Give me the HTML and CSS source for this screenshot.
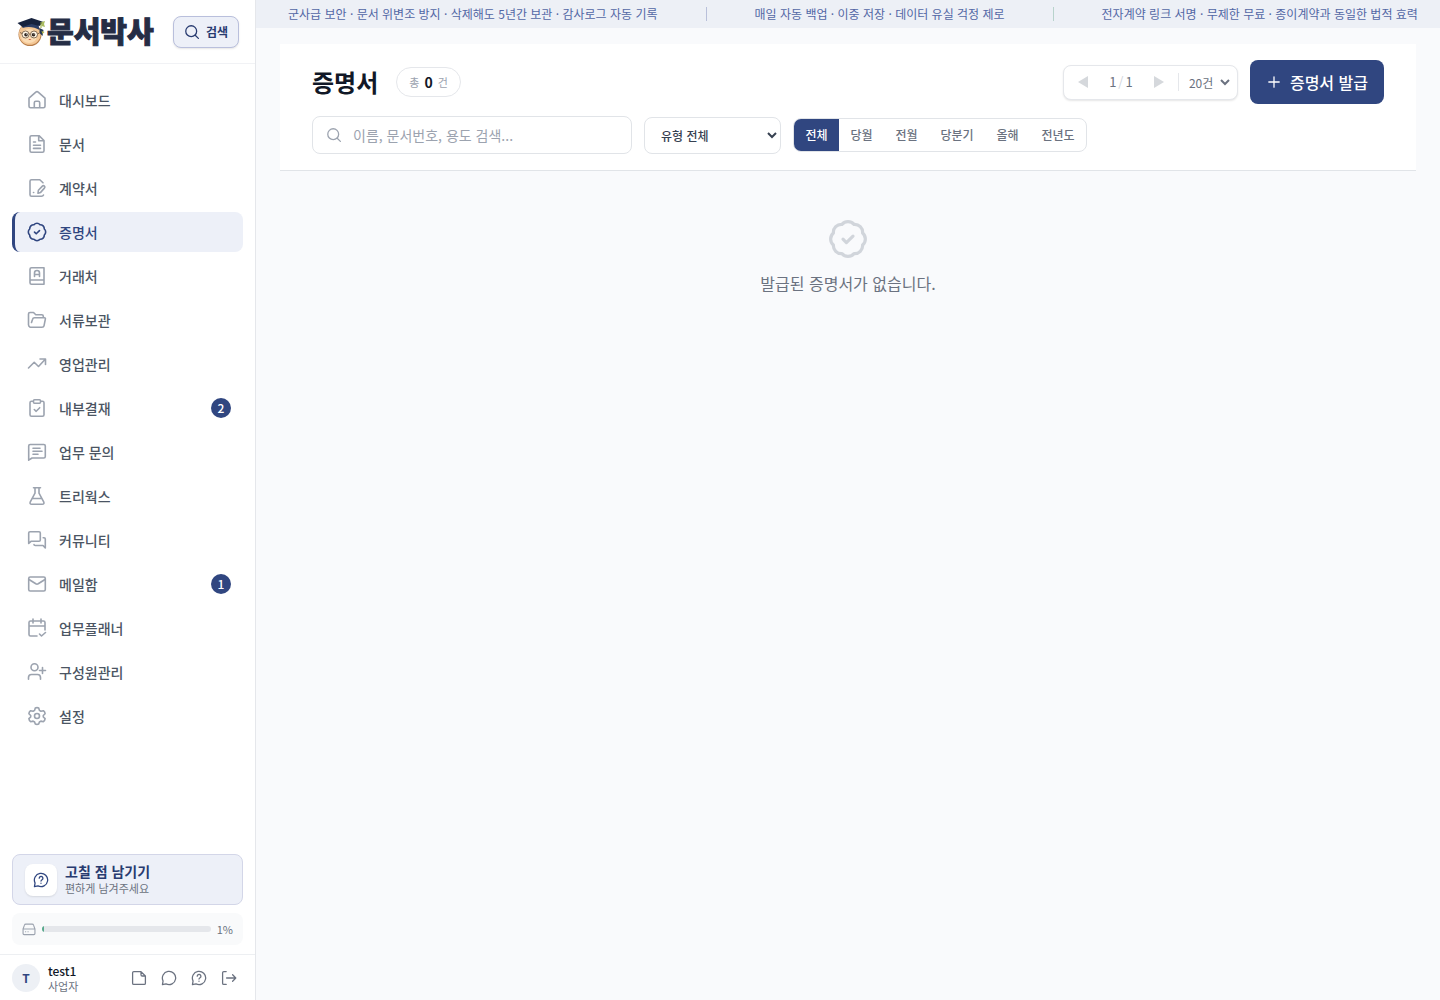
FILE: index.html
```html
<!DOCTYPE html>
<html lang="ko">
<head>
<meta charset="utf-8">
<meta name="viewport" content="width=device-width, initial-scale=1">
<title>증명서 - 문서박사</title>
<link rel="stylesheet" href="styles.css">
</head>
<body>
<svg class="sprite" aria-hidden="true">
  <symbol id="seal" viewBox="0 0 20 20"><path d="M13.02 2.7A4 4 0 0 1 17.3 6.98A4 4 0 0 1 17.3 13.02A4 4 0 0 1 13.02 17.3A4 4 0 0 1 6.98 17.3A4 4 0 0 1 2.7 13.02A4 4 0 0 1 2.7 6.98A4 4 0 0 1 6.98 2.7A4 4 0 0 1 13.02 2.7Z"/><path d="m7.5 10.1 1.7 1.7 3.3-3.2"/></symbol>
  <symbol id="search" viewBox="0 0 20 20"><circle cx="9" cy="9" r="6.8"/><path d="m14 14 4 4"/></symbol>
  <symbol id="bubble" viewBox="0 0 20 20"><path d="M1.800 18.200 2.600 13.700A8.300 8.300 0 1 1 6.300 17.400Z"/></symbol>
  <symbol id="help" viewBox="0 0 20 20"><path d="M1.800 18.200 2.600 13.700A8.300 8.300 0 1 1 6.300 17.400Z"/><path d="M7.800 7.700a2.300 2.300 0 1 1 3.500 2c-.8.5-1.300.9-1.300 1.600M10 14v.2"/></symbol>
</svg>
<div class="app">
  <aside class="sidebar">
    <header class="brand-bar">
      <a class="brand" href="#">
        <svg class="mascot" viewBox="0 0 30 30" aria-hidden="true">
          <circle cx="13.500" cy="17.500" r="11.500" fill="#b77d4a"/><circle cx="13.300" cy="17" r="10.800" fill="#f4c795"/><ellipse cx="12.500" cy="19" rx="8" ry="7" fill="#fbdcb4"/>
          <path d="m6 7 9-2 7 3 1 5c-5-3-11-4-17-2Z" fill="#2c3e66"/><path d="m1 6 14-5 12 4-4 4-8-2-9 3Z" fill="#17233e"/>
          <path d="M24.500 5v6" stroke="#90a735"/><path d="m25 5 3.500-1-1 3 1 3-3.500-1Z" fill="#a9bb5e"/><path d="m23 11 4 2-1 6-3-3Z" fill="#263955"/><path d="m25 14 3 1-2 2Z" fill="#b5b94d"/>
          <g fill="#fff6e6" stroke="#69503a" stroke-width=".8"><circle cx="9" cy="17.500" r="3.500"/><circle cx="17.500" cy="17.500" r="3.500"/><path d="M12.500 17h1.500M3.500 15.500l2 1M21 17l2-1"/></g>
          <circle cx="9.500" cy="17.700" r="1.800" fill="#302620"/><circle cx="17" cy="17.700" r="1.800" fill="#302620"/><circle cx="10" cy="17" r=".5" fill="#fff"/><circle cx="17.500" cy="17" r=".5" fill="#fff"/>
          <path d="M11.800 22q1.500 1.800 3 0Z" fill="#c9573f"/>
        </svg>
        <span>문서박사</span>
      </a>
      <button class="search-button" type="button"><svg class="icon icon-16"><use href="#search"/></svg>검색</button>
    </header>
    <nav class="nav" aria-label="주 메뉴">
      <a href="#"><svg class="icon" viewBox="0 0 20 20"><path d="M2 8.2 8.800 2.200q1.200-1 2.400 0L18 8.200v8q0 1.600-1.600 1.600H3.600Q2 17.800 2 16.200ZM7.300 17.800v-5q0-1.500 1.500-1.500h2.400q1.500 0 1.500 1.500v5"/></svg>대시보드</a>
      <a href="#"><svg class="icon" viewBox="0 0 20 20"><path d="M12 1.700H4.500Q3 1.700 3 3.200v13.600q0 1.500 1.500 1.500h11q1.500 0 1.500-1.500V6.500ZM11.700 2v4.800H17M6.500 8h2M6.500 11.200h7M6.500 14.400h7"/></svg>문서</a>
      <a href="#"><svg class="icon" viewBox="0 0 20 20"><path d="M16.500 17q-.5 1.300-2 1.300h-10Q3 18.300 3 16.800V3.200q0-1.500 1.500-1.500h8.300L16 4.800M6.500 14.500h.2M11 15.200l.4-2.900 4-4.200q1-1 2 0t0 2l-3.800 4.300Z"/></svg>계약서</a>
      <a class="active" href="#" aria-current="page"><svg class="icon"><use href="#seal"/></svg>증명서</a>
      <a href="#"><svg class="icon" viewBox="0 0 20 20"><path d="M4.500 1.700H17v16.600H4.500Q3 18.300 3 16.800V3.200q0-1.500 1.500-1.500ZM3 14h14M7.500 10.500V7a2.500 2.500 0 0 1 5 0v3.500M7.500 8.500h5"/></svg>거래처</a>
      <a href="#"><svg class="icon" viewBox="0 0 20 20"><path d="M3 17.200q-1.500-1-1.500-2.500V4q0-1.500 1.500-1.500h3.500l2.300 2.300h6q1.500 0 1.500 1.500v1.500M4.500 12.500l1-3q.4-1.700 2-1.700h9.800q1.500 0 1 1.500l-1.300 6.500q-.3 1.400-2 1.400H3"/></svg>서류보관</a>
      <a href="#"><svg class="icon" viewBox="0 0 20 20"><path d="m1.500 14 5.700-5.700 4.300 4.200L18.500 5M13 5h5.500v5.500"/></svg>영업관리</a>
      <a href="#"><svg class="icon" viewBox="0 0 20 20"><path d="M6.500 3.200h-2Q3 3.200 3 4.700v12q0 1.500 1.500 1.500h11q1.500 0 1.500-1.500v-12q0-1.500-1.500-1.500h-2M7.500 1.700h5q1 0 1 1v1.500q0 1-1 1h-5q-1 0-1-1V2.700q0-1 1-1ZM7.300 11.500l1.900 1.800 3.500-3.600"/></svg>내부결재<span class="badge">2</span></a>
      <a href="#"><svg class="icon" viewBox="0 0 20 20"><path d="M1.700 18.200V4q0-1.500 1.500-1.500h13.600q1.500 0 1.500 1.500v10.500q0 1.500-1.500 1.500H5ZM6 6.200h7M6 9.200h9M6 12.200h5"/></svg>업무 문의</a>
      <a href="#"><svg class="icon" viewBox="0 0 20 20"><path d="M6.500 1.700h7M8 1.700v5.500L3.300 15.800q-1 2.400 1.500 2.400h10.400q2.500 0 1.500-2.400L12 7.200V1.700M5.500 12.500h9"/></svg>트리웍스</a>
      <a href="#"><svg class="icon" viewBox="0 0 20 20"><path d="M1.700 13.500V3q0-1.300 1.300-1.300h9q1.300 0 1.300 1.300v7q0 1.300-1.300 1.300H4ZM7 14.500q0 1 1.300 1H16l2.300 2.500V9q0-1.300-1.300-1.300h-.8"/></svg>커뮤니티</a>
      <a href="#"><svg class="icon" viewBox="0 0 20 20"><rect x="1.700" y="3" width="16.600" height="14" rx="1.500"/><path d="m2 5.500 6.800 4.300q1.200.7 2.400 0L18 5.500"/></svg>메일함<span class="badge">1</span></a>
      <a href="#"><svg class="icon" viewBox="0 0 20 20"><path d="M10 18H3.500Q2 18 2 16.500v-12Q2 3 3.500 3h13Q18 3 18 4.500V12M6 1v4M14 1v4M2 8h16M12.500 16l2 2 4-3.500"/></svg>업무플래너</a>
      <a href="#"><svg class="icon" viewBox="0 0 20 20"><circle cx="7.500" cy="5.300" r="3.500"/><path d="M1.500 17.200v-1.700q0-3 3-3h6q3 0 3 3v1.700M15.500 5.500v6M12.500 8.500h6"/></svg>구성원관리</a>
      <a href="#"><svg class="icon" viewBox="0 0 20 20"><circle cx="10" cy="10" r="2.500"/><path d="M8.300 2q1.700-.8 3.400 0l.7 2.400 1.500.9 2.500-.6q1.500 1.100 1.700 3L16.300 9.500v1.500l1.800 1.700q-.2 1.900-1.700 3l-2.500-.6-1.500.9-.7 2q-1.700.8-3.400 0l-.7-2-1.500-.9-2.500.6q-1.500-1.100-1.700-3L3.700 11V9.500L1.900 7.700q.2-1.900 1.700-3l2.500.6 1.500-.9Z"/></svg>설정</a>
    </nav>
    <div class="sidebar-tools">
      <button class="feedback" type="button">
        <span class="feedback-icon"><svg class="icon icon-16"><use href="#help"/></svg></span>
        <span class="feedback-text"><strong>고칠 점 남기기</strong><small>편하게 남겨주세요</small></span>
      </button>
      <div class="storage">
        <svg class="icon icon-14" viewBox="0 0 20 20"><path d="m1.500 10 2-5.500Q4 3 5.500 3h9Q16 3 16.500 4.500l2 5.500v6.500q0 1.500-1.500 1.500H3q-1.500 0-1.500-1.500V10h17M5 14h.3M8.500 14h.3"/></svg>
        <div class="meter" role="progressbar" aria-label="저장 공간" aria-valuenow="1" aria-valuemin="0" aria-valuemax="100"><span style="width:1%"></span></div>
        <span>1%</span>
      </div>
    </div>
    <footer class="account">
      <span class="avatar">T</span>
      <div class="user"><strong>test1</strong><small>사업자</small></div>
      <div class="account-actions">
        <button type="button" aria-label="메모"><svg class="icon icon-16" viewBox="0 0 20 20"><path d="M12.500 2H3.500Q2 2 2 3.500v13Q2 18 3.500 18h13q1.500 0 1.500-1.500V7.500ZM12.500 2v4q0 1.500 1.500 1.500h4"/></svg></button>
        <button type="button" aria-label="채팅"><svg class="icon icon-16"><use href="#bubble"/></svg></button>
        <button type="button" aria-label="도움말"><svg class="icon icon-16"><use href="#help"/></svg></button>
        <button type="button" aria-label="로그아웃"><svg class="icon icon-16" viewBox="0 0 20 20"><path d="M6.500 2H3.500Q2 2 2 3.500v13Q2 18 3.500 18h3M7 10h11.500M14.500 6l4 4-4 4"/></svg></button>
      </div>
    </footer>
  </aside>
  <div class="content">
    <div class="ticker">
      <span>군사급 보안 · 문서 위변조 방지 · 삭제해도 5년간 보관 · 감사로그 자동 기록</span><i></i>
      <span>매일 자동 백업 · 이중 저장 · 데이터 유실 걱정 제로</span><i class="green"></i>
      <span>전자계약 링크 서명 · 무제한 무료 · 종이계약과 동일한 법적 효력</span>
    </div>
    <main class="main">
      <section class="panel">
        <div class="title-row">
          <h1>증명서</h1>
          <span class="count">총 <b>0</b> 건</span>
          <div class="pager">
            <button type="button" aria-label="이전 페이지" disabled><svg viewBox="0 0 10 12"><path d="M10 0v12L0 6Z"/></svg></button>
            <span class="page">1<em>/</em>1</span>
            <button type="button" aria-label="다음 페이지" disabled><svg viewBox="0 0 10 12"><path d="M0 0v12l10-6Z"/></svg></button>
            <select aria-label="페이지당 건수"><option>20건</option><option>50건</option></select>
          </div>
          <button class="primary" type="button"><svg class="icon icon-16" viewBox="0 0 20 20"><path d="M10 3.500v13M3.500 10h13"/></svg>증명서 발급</button>
        </div>
        <div class="filter-row">
          <label class="search"><svg class="icon icon-16"><use href="#search"/></svg><input type="text" aria-label="증명서 검색" placeholder="이름, 문서번호, 용도 검색..."></label>
          <select class="type" aria-label="유형"><option>유형 전체</option></select>
          <div class="periods" role="group" aria-label="기간">
            <button class="active" type="button">전체</button><button type="button">당월</button><button type="button">전월</button><button type="button">당분기</button><button type="button">올해</button><button type="button">전년도</button>
          </div>
        </div>
      </section>
      <section class="empty"><svg class="icon"><use href="#seal"/></svg><p>발급된 증명서가 없습니다.</p></section>
    </main>
  </div>
</div>
</body>
</html>
```
FILE: styles.css
```css
* { box-sizing: border-box; }
body { margin: 0; background: #f9fafc; color: #111827; font-family: "Noto Sans CJK KR", sans-serif; font-size: 14px; line-height: 20px; }
button, input, select { font: inherit; color: inherit; }
button { display: inline-flex; align-items: center; border: 0; padding: 0; background: none; cursor: pointer; }
a { color: inherit; text-decoration: none; }
.sprite { display: none; }
.icon { width: 20px; height: 20px; flex: none; fill: none; stroke: currentColor; stroke-width: 1.6; stroke-linecap: round; stroke-linejoin: round; }
.icon-16 { width: 16px; height: 16px; }
.icon-14 { width: 14px; height: 14px; }
.app { display: flex; min-height: 100vh; }

/* Sidebar */
.sidebar { position: sticky; top: 0; display: flex; flex-direction: column; flex: 0 0 256px; height: 100vh; background: #fff; border-right: 1px solid #e5e7eb; }
.brand-bar { display: flex; align-items: center; justify-content: space-between; flex: none; height: 64px; padding: 0 16px; border-bottom: 1px solid #f1f2f5; }
.brand { display: flex; align-items: center; color: #252d45; font-size: 29px; line-height: 32px; font-weight: 900; -webkit-text-stroke: 1px #252d45; }
.brand span { padding-bottom: 3px; }
.mascot { width: 31px; height: 30px; }
.search-button { gap: 6px; height: 32px; padding: 0 10px; border: 1px solid #b9bfdc; border-radius: 8px; background: #edf0f8; color: #283b70; font-size: 12px; font-weight: 700; box-shadow: 0 1px 2px #0000001a; }
.nav { display: flex; flex: 1; flex-direction: column; gap: 4px; min-height: 0; padding: 16px 12px; overflow-y: auto; }
.nav a { display: flex; align-items: center; flex: none; gap: 12px; height: 40px; padding: 0 12px; border-left: 3px solid transparent; border-radius: 8px; color: #4b5563; font-weight: 500; }
.nav .icon { color: #9ca3af; }
.nav .active { border-left-color: #304680; background: #edf0f8; color: #304680; }
.nav .active .icon { color: #304680; }
.badge { width: 20px; height: 20px; margin-left: auto; border-radius: 10px; background: #304680; color: #fff; font-size: 12px; text-align: center; }
.sidebar-tools { display: flex; flex-direction: column; gap: 8px; padding: 0 12px 9px; }
.feedback { gap: 8px; height: 51px; padding: 0 12px; border: 1px solid #d3d6e8; border-radius: 8px; background: #edf0f8; text-align: left; }
.feedback-icon { display: grid; place-items: center; width: 32px; height: 32px; border-radius: 8px; background: #fff; color: #304680; box-shadow: 0 1px 2px #0000001a; }
.feedback-text { display: flex; flex-direction: column; }
.feedback strong { color: #283b70; font-size: 14px; line-height: 18px; }
.feedback small { line-height: 17px; }
small { color: #6b7280; font-size: 11px; }
.storage { display: flex; align-items: center; gap: 6px; height: 32px; padding: 0 10px; border-radius: 8px; background: #f9fafb; color: #6b7280; font-size: 11px; }
.storage .icon { color: #9ca3af; }
.meter { flex: 1; height: 6px; overflow: hidden; border-radius: 3px; background: #e5e7eb; }
.meter span { display: block; height: 100%; background: #58a98c; }
.account { display: flex; align-items: center; flex: none; gap: 8px; height: 46px; padding: 0 12px; border-top: 1px solid #edeff2; }
.avatar { display: grid; place-items: center; width: 28px; height: 28px; border-radius: 50%; background: #edf0f5; color: #304680; font-size: 12px; font-weight: 700; }
.user { display: flex; flex-direction: column; }
.user strong { font-size: 12px; line-height: 16px; font-weight: 500; }
.user small { line-height: 14px; }
.account-actions { display: flex; gap: 2px; margin-left: auto; color: #6b7280; }
.account-actions button { justify-content: center; width: 28px; height: 28px; }

/* Page */
.content { flex: 1; min-width: 0; }
.ticker { display: flex; align-items: center; gap: 48px; height: 28px; padding: 0 0 0 32px; overflow: hidden; background: #edf0f6; color: #5267a5; font-size: 12px; white-space: nowrap; }
.ticker span { flex: none; }
.ticker i { flex: none; width: 1px; height: 14px; background: #b9c0da; }
.ticker .green { background: #b8d3cc; }
.main { padding: 16px 24px; }
.panel { display: flex; flex-direction: column; gap: 12px; padding: 16px 32px; border-bottom: 1px solid #e1e4e8; background: #fff; }
.title-row, .filter-row { display: flex; align-items: center; gap: 12px; }
h1 { margin: 0 6px 0 0; color: #111827; font-size: 24px; line-height: 32px; font-weight: 700; }
.count { display: flex; align-items: center; gap: 5px; height: 30px; padding: 0 12px; border: 1px solid #e5e7eb; border-radius: 15px; color: #9ca3af; font-size: 11px; }
.count b { color: #111827; font-size: 14px; }
.pager { display: flex; align-items: center; height: 35px; padding-right: 4px; margin-left: auto; border: 1px solid #e5e7eb; border-radius: 8px; background: #fff; color: #6b7280; font-size: 12px; box-shadow: 0 1px 2px #0000001a; }
.pager button { justify-content: center; width: 38px; height: 32px; }
.pager svg { width: 10px; height: 12px; fill: #d5d8dc; }
.page { width: 38px; text-align: center; font-size: 13px; }
.page em { margin: 0 2px; color: #d1d5db; font-style: normal; }
.pager select { width: 55px; height: 18px; padding: 0 0 0 6px; border: 0; border-left: 1px solid #e5e7eb; background: #fff; line-height: 18px; }
.primary { gap: 8px; height: 44px; padding: 0 16px; border-radius: 8px; background: #304680; color: #fff; font-size: 16px; font-weight: 500; }
.search { display: flex; align-items: center; gap: 11px; flex: 0 1 320px; height: 38px; padding: 0 13px; border: 1px solid #e1e4e8; border-radius: 8px; color: #9ca3af; }
.search input { flex: 1; min-width: 0; padding: 0; border: 0; outline: 0; background: none; color: #111827; }
.search input::placeholder { color: #9ca3af; opacity: 1; }
.type { width: 137px; height: 37px; padding: 0 0 0 12px; border: 1px solid #e1e4e8; border-radius: 8px; background: #fff; color: #374151; font-size: 12px; font-weight: 500; }
.periods { display: flex; width: 294px; height: 34px; overflow: hidden; border: 1px solid #e1e4e8; border-radius: 8px; }
.periods button { flex: 1 0 auto; justify-content: center; padding: 0 11px; color: #6b7280; font-size: 12px; font-weight: 500; }
.periods .active { background: #304680; color: #fff; }
.empty { display: flex; flex-direction: column; align-items: center; gap: 12px; padding: 48px 24px; color: #6b7280; font-size: 16px; line-height: 24px; }
.empty .icon { width: 40px; height: 40px; color: #d1d5db; }
.empty p { margin: 0; }
```
